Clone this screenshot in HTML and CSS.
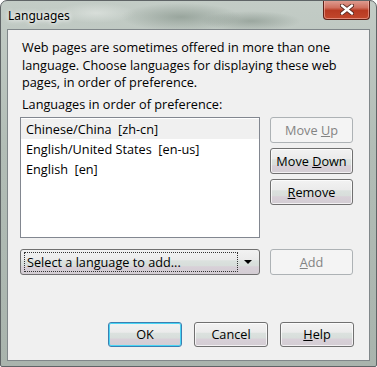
FILE: index.html
```html
<!DOCTYPE html>
<html lang="en">
<head>
    <meta charset="UTF-8">
    <title>Languages</title>
    <link rel="stylesheet" href="styles.css">
</head>
<body>
    <div class="window">
        <div class="titlebar">
            <span class="title">Languages</span>
            <button class="close" title="Close">
                <svg width="14" height="11" viewBox="0 0 14 11">
                    <path d="M2 1.5 L12 9.5 M12 1.5 L2 9.5" stroke="#5a2a22" stroke-width="4.2" stroke-linecap="round"/>
                    <path d="M2 1.5 L12 9.5 M12 1.5 L2 9.5" stroke="#fff" stroke-width="2.4" stroke-linecap="round"/>
                </svg>
            </button>
        </div>

        <div class="client">
            <p class="intro">Web pages are sometimes offered in more than one language. Choose languages for displaying these web pages, in order of preference.</p>
            <p class="label">Languages in order of preference:</p>

            <div class="list-row">
                <ul class="lang-list">
                    <li class="selected">Chinese/China  [zh-cn]</li>
                    <li>English/United States  [en-us]</li>
                    <li>English  [en]</li>
                </ul>
                <div class="side-buttons">
                    <button class="btn" disabled>Move <u>U</u>p</button>
                    <button class="btn">Move <u>D</u>own</button>
                    <button class="btn"><u>R</u>emove</button>
                </div>
            </div>

            <div class="add-row">
                <div class="combo">
                    <span class="combo-text">Select a language to add...</span>
                    <span class="combo-arrow"></span>
                </div>
                <button class="btn" disabled><u>A</u>dd</button>
            </div>

            <div class="footer">
                <button class="btn default">OK</button>
                <button class="btn">Cancel</button>
                <button class="btn"><u>H</u>elp</button>
            </div>
        </div>
    </div>
</body>
</html>
```

FILE: styles.css
```css
html, body {
    margin: 0;
    padding: 0;
}

body {
    font-family: "Open Sans", "Noto Sans", sans-serif;
    font-size: 12.7px;
    color: #000;
    background: #fff;
}

.window {
    width: 377px;
    height: 367px;
    box-sizing: border-box;
    border: 1px solid #5f6466;
    border-radius: 7px 7px 2px 2px;
    /* aero glass frame */
    background:
        radial-gradient(ellipse 60px 14px at 180px 16px, rgba(120, 135, 125, 0.55), transparent),
        radial-gradient(ellipse 50px 10px at 250px 20px, rgba(110, 125, 115, 0.45), transparent),
        radial-gradient(ellipse 40px 10px at 95px 12px, rgba(225, 230, 226, 0.7), transparent),
        linear-gradient(180deg, #c3ccc6 0%, #b2bdb6 40%, #a9b4ad 100%);
    display: flex;
    flex-direction: column;
    overflow: hidden;
}

.titlebar {
    height: 28px;
    display: flex;
    justify-content: space-between;
    align-items: flex-start;
}

.title {
    margin: 6px 0 0 7px;
    font-family: "Noto Sans", sans-serif;
    font-size: 12px;
    line-height: 18px;
    text-shadow: 0 0 6px #fff, 0 0 4px #fff;
}

.close {
    width: 47px;
    height: 20px;
    margin: -1px 6px 0 0;
    padding: 0;
    border: 1px solid #5e2118;
    border-top: none;
    border-radius: 0 0 4px 4px;
    background: linear-gradient(180deg, #e0a196 0%, #d0705f 40%, #b83a22 55%, #c2472c 100%);
    box-shadow: inset 0 0 0 1px rgba(255, 200, 190, 0.5);
    display: flex;
    align-items: center;
    justify-content: center;
}

.client {
    flex: 1;
    margin: 0 6px 5px 6px;
    border: 1px solid #80878a;
    background: #f0f0f0;
    padding: 9px 15px 0 12px;
}

.intro {
    margin: 0;
    padding-left: 2px;
    line-height: 17.5px;
}

.label {
    margin: 4px 0 0;
    padding-left: 2px;
    line-height: 17px;
}

.list-row {
    display: flex;
    gap: 10px;
    margin-top: 4px;
}

.lang-list {
    list-style: none;
    margin: 0;
    padding: 1px 0 0;
    width: 240px;
    height: 121px;
    box-sizing: border-box;
    border: 1px solid #828790;
    background: #fff;
}

.lang-list li {
    height: 20px;
    line-height: 20px;
    padding-left: 5px;
    white-space: pre;
}

.lang-list li.selected {
    background: #f0f0f0;
}

.side-buttons {
    display: flex;
    flex-direction: column;
    gap: 5px;
}

.btn {
    font-family: inherit;
    font-size: 12.7px;
    color: #000;
    width: 83px;
    height: 26px;
    padding: 0;
    box-sizing: border-box;
    border: 1px solid #707070;
    border-radius: 3px;
    background: linear-gradient(180deg, #f2f2f2 0%, #ebebeb 40%, #dbe1de 45%, #d8dedb 65%, #d8d0d8 70%, #d3cdd3 100%);
    box-shadow: inset 0 0 0 1px rgba(255, 255, 255, 0.7);
}

.btn:disabled {
    color: #838383;
    border-color: #adb2b5;
    background: #f4f4f4;
    box-shadow: none;
}

.btn.default {
    border-color: #3c7fb1;
    box-shadow: inset 0 0 0 1px #48d5f5;
}

.add-row {
    display: flex;
    gap: 10px;
    margin-top: 11px;
}

.combo {
    width: 240px;
    height: 26px;
    box-sizing: border-box;
    border: 1px solid #707070;
    border-radius: 3px;
    background: linear-gradient(180deg, #f2f2f2 0%, #ebebeb 40%, #dbe1de 45%, #d8dedb 65%, #d8d0d8 70%, #d3cdd3 100%);
    display: flex;
    align-items: center;
    padding: 2px 0 2px 3px;
}

.combo-text {
    flex: 1;
    height: 100%;
    box-sizing: border-box;
    border: 1px dotted #333;
    line-height: 18px;
    padding-left: 2px;
}

.combo-arrow {
    width: 0;
    height: 0;
    margin: 0 7px 0 6px;
    border-left: 4px solid transparent;
    border-right: 4px solid transparent;
    border-top: 4px solid #000;
}

.footer {
    display: flex;
    justify-content: flex-end;
    gap: 12px;
    margin-top: 47px;
}

.footer .btn {
    width: 74px;
    height: 25px;
}
```
